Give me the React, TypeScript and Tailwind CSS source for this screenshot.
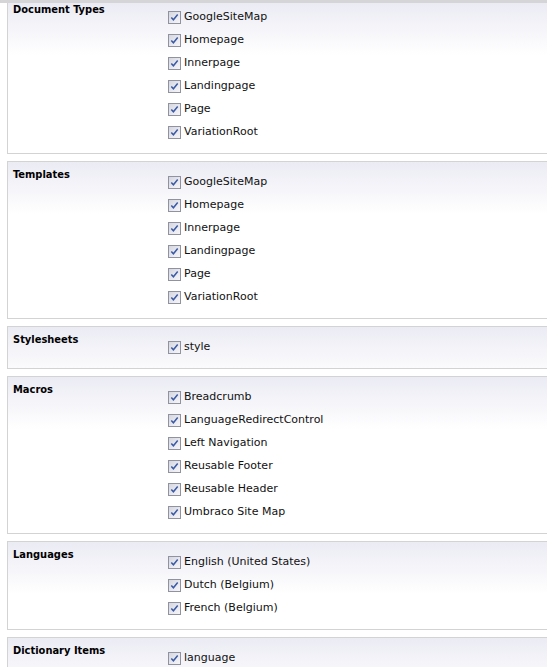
import React from 'react'

type Section = {
  title: string
  items: string[]
}

const sections: Section[] = [
  { title: 'Document Types', items: ['GoogleSiteMap', 'Homepage', 'Innerpage', 'Landingpage', 'Page', 'VariationRoot'] },
  { title: 'Templates', items: ['GoogleSiteMap', 'Homepage', 'Innerpage', 'Landingpage', 'Page', 'VariationRoot'] },
  { title: 'Stylesheets', items: ['style'] },
  {
    title: 'Macros',
    items: ['Breadcrumb', 'LanguageRedirectControl', 'Left Navigation', 'Reusable Footer', 'Reusable Header', 'Umbraco Site Map'],
  },
  { title: 'Languages', items: ['English (United States)', 'Dutch (Belgium)', 'French (Belgium)'] },
  { title: 'Dictionary Items', items: ['language'] },
]

function CheckBox() {
  return (
    <span className="inline-flex h-[13px] w-[13px] shrink-0 items-center justify-center border border-[#90939f] bg-[linear-gradient(135deg,#d6d6e0,#f6f6f9)]">
      <svg width="9" height="9" viewBox="0 0 9 9">
        <path d="M1.3 4.4 L3.4 6.8 L7.7 1.6" fill="none" stroke="#3a5aa6" strokeWidth="1.5" />
      </svg>
    </span>
  )
}

function Panel({ section, first }: { section: Section; first?: boolean }) {
  return (
    <div
      className={`flex w-[560px] border border-[#d3d3d3] bg-[linear-gradient(to_bottom,#ebebf4,#ffffff_52px)] ${
        first ? 'border-t-0' : 'mt-[7px]'
      }`}
    >
      <div
        className={`w-[160px] shrink-0 pl-[5px] font-['DejaVu_Sans_Condensed','DejaVu_Sans',sans-serif] text-[11px] font-bold leading-[13px] text-black ${
          first ? 'pt-0' : 'pt-[6px]'
        }`}
      >
        {section.title}
      </div>
      <div className={`flex flex-col pb-[9px] ${first ? 'pt-[3px]' : 'pt-[9px]'}`}>
        {section.items.map((item, i) => (
          <label key={i} className="flex h-[23px] items-center gap-[3px] text-[11px] text-[#111]">
            <CheckBox />
            <span>{item}</span>
          </label>
        ))}
      </div>
    </div>
  )
}

export default function App() {
  return (
    <div className="h-[667px] w-[547px] overflow-hidden bg-white font-['DejaVu_Sans',Tahoma,sans-serif]">
      <div className="h-[3px] bg-[#d5d5d7]" />
      <div className="pl-[7px]">
        {sections.map((s, i) => (
          <Panel key={s.title} section={s} first={i === 0} />
        ))}
      </div>
    </div>
  )
}
